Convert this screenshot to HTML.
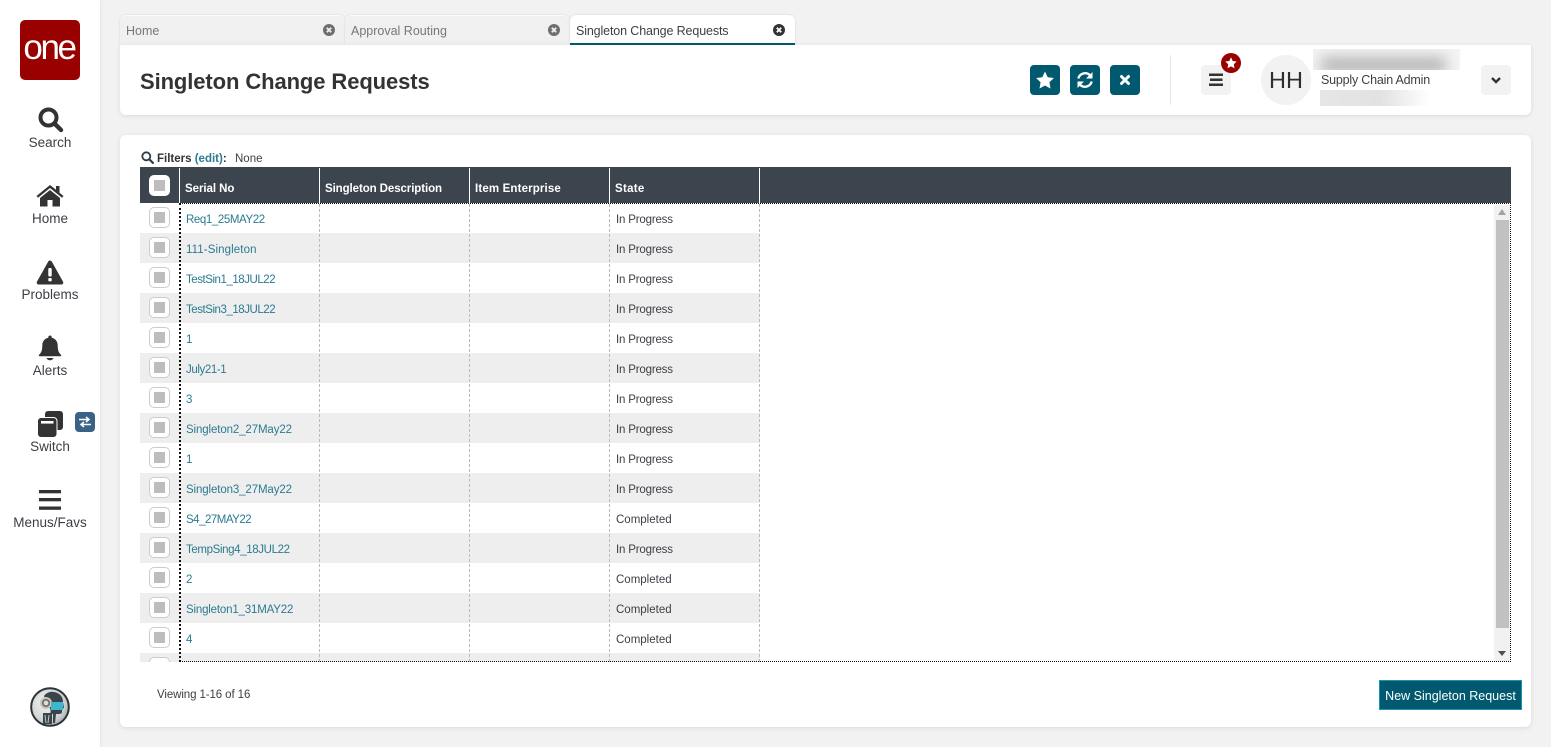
<!DOCTYPE html>
<html lang="en"><head><meta charset="utf-8"><title>Singleton Change Requests</title>
<style>
*{box-sizing:border-box}
html,body{margin:0;padding:0;width:1551px;height:747px;overflow:hidden;background:#f2f2f2;font-family:"Liberation Sans",sans-serif;color:#333}
.a,.t{position:absolute}
.t{white-space:nowrap}
#side{position:absolute;left:0;top:0;width:100px;height:747px;background:#fff;box-shadow:1px 0 3px rgba(0,0,0,.06)}
.nl{position:absolute;left:0;width:100px;text-align:center;font-size:13.5px;line-height:16px;color:#3b3f45}
.panel{position:absolute;background:#fff;border-radius:6px;box-shadow:0 1px 5px rgba(0,0,0,.1)}
.tab{position:absolute;top:15px;height:30px;width:225px;background:#f0f0f0;border-top:1px solid #fafafa;border-radius:6px 6px 0 0;box-shadow:0 0 2px rgba(0,0,0,.12);font-size:12.5px;line-height:30px;padding-left:6px;color:#777}
.tab.on{background:#fff;color:#3b3f45;border-bottom:2px solid #005a6e;border-top:0;line-height:33px;letter-spacing:-.13px}
.tab svg{position:absolute;left:202px;top:7px}
.tab.on svg{top:8px}
.btn{position:absolute;top:65px;width:30px;height:30px;border-radius:4px;background:#00596e}
.gbtn{position:absolute;top:65px;width:30px;height:30px;border-radius:4px;background:#f2f2f2}
.hc{position:absolute;top:182px;font-size:11.5px;line-height:14px;font-weight:bold;color:#fff;white-space:nowrap}
.vd{position:absolute;top:168px;width:1px;height:35px;background:#fff}
.row{position:absolute;left:0;width:620px;height:30px}
.row.g{background:#eee}
.cb{position:absolute;left:9px;top:4px;width:21px;height:21px;border:1px solid #ccc;border-radius:5px;background:#fff}
.cb i{position:absolute;left:4px;top:4px;width:11px;height:11px;background:#bdbdbd}
.s,.l{position:absolute;top:10px;font-size:11.5px;line-height:15px;white-space:nowrap}
.l{left:46px;color:#2a7b90}
.s{left:476px;color:#3b3f45;letter-spacing:-.18px}
.s.c{letter-spacing:0}
.dash{position:absolute;top:204px;height:458px;width:0;border-left:1px dashed #bbb}
</style></head><body>

<div id="side">
  <div class="a" style="left:20px;top:20px;width:60px;height:60px;background:#990000;border-radius:5px"></div>
  <div class="t" style="left:19px;top:26px;width:60px;text-align:center;color:#fff;font-size:35px;line-height:44px;letter-spacing:-2.4px">one</div>

  <svg class="a" style="left:38px;top:107px" width="26" height="26" viewBox="0 0 26 26"><circle cx="10.500" cy="10.500" r="8" fill="none" stroke="#333" stroke-width="4"/><path d="M16.500 16.500l6.500 6.500" stroke="#333" stroke-width="4.400" stroke-linecap="round"/></svg>
  <div class="nl" style="top:135px">Search</div>

  <svg class="a" style="left:36px;top:184px" width="28" height="23" viewBox="0 0 28 23"><path d="M14 1L.5 12l1.500 1.800L14 4l12 9.800 1.500-1.800L23.500 8.700V2h-3.500v3.800z" fill="#333"/><path d="M14 6L4 14v8.500h7.500V16h5v6.500H24V14z" fill="#333"/></svg>
  <div class="nl" style="top:211px">Home</div>

  <svg class="a" style="left:36px;top:259px" width="28" height="26" viewBox="0 0 28 26"><path d="M14 1.500c-.8 0-1.400.4-1.800 1.100L1 22.600c-.8 1.500.2 2.900 1.800 2.900h22.400c1.600 0 2.600-1.400 1.800-2.900L15.800 2.600c-.4-.7-1-1.100-1.800-1.100z" fill="#333"/><rect x="12.300" y="9" width="3.400" height="8.500" rx="1" fill="#fff"/><rect x="12.300" y="19" width="3.400" height="3.400" rx="1" fill="#fff"/></svg>
  <div class="nl" style="top:287px">Problems</div>

  <svg class="a" style="left:38px;top:335px" width="24" height="26" viewBox="0 0 24 26"><path d="M12 0.500c-1 0-1.700.7-1.700 1.700v.6C6.500 3.600 4.300 6.600 4.300 10.500c0 5.500-1.300 7.400-3.300 9.300-.5.500-.2 1.400.6 1.400h20.800c.8 0 1.100-.9.6-1.400-2-1.900-3.300-3.800-3.300-9.300 0-3.900-2.200-6.900-6-7.700v-.6c0-1-.7-1.700-1.700-1.700z" fill="#333"/><path d="M8.500 23h7c-.4 1.300-1.900 2.300-3.500 2.300S8.900 24.300 8.500 23z" fill="#333"/></svg>
  <div class="nl" style="top:363px">Alerts</div>

  <svg class="a" style="left:37px;top:410px" width="27" height="28" viewBox="0 0 27 28"><rect x="8" y="1" width="18" height="19" rx="3" fill="#333"/><rect x=".5" y="7.500" width="19.500" height="20" rx="3.500" fill="#333" stroke="#fff" stroke-width="1"/><rect x="4" y="11" width="12.500" height="2.600" fill="#fff"/></svg>
  <div class="a" style="left:75px;top:412px;width:20px;height:20px;border-radius:4px;background:#3a6186"></div>
  <svg class="a" style="left:78px;top:416px" width="14" height="12" viewBox="0 0 14 12"><path d="M1 3.500h9M8 1l3 2.500-3 2.500M13 8.500H4M6 6L3 8.500 6 11" fill="none" stroke="#fff" stroke-width="1.500"/></svg>
  <div class="nl" style="top:439px">Switch</div>

  <svg class="a" style="left:38px;top:489px" width="24" height="22" viewBox="0 0 24 22"><rect x="1" y="1" width="22" height="3.300" fill="#333"/><rect x="1" y="9" width="22" height="3.300" fill="#333"/><rect x="1" y="17.500" width="22" height="3.300" fill="#333"/></svg>
  <div class="nl" style="top:515px">Menus/Favs</div>

  <svg class="a" style="left:30px;top:687px" width="40" height="40" viewBox="0 0 40 40">
    <defs><radialGradient id="g" cx=".4" cy=".4" r=".7"><stop offset="0" stop-color="#f4f4f4"/><stop offset=".7" stop-color="#cfd0d1"/><stop offset="1" stop-color="#9a9c9e"/></radialGradient></defs>
    <circle cx="20" cy="20" r="18.800" fill="url(#g)" stroke="#2c3336" stroke-width="2"/>
    <path d="M14 9c2-3 6-5 10-4 6 1 9 5 9 10l1 6-2 1v3c0 2-2 2-6 2l-1 9H23v-9h-3c2-4-1-7-2-9z" fill="#3a454b"/>
    <path d="M13 26h9v11h-9z" fill="#3a454b"/><path d="M15 28l1 8M19 28l-1 8" stroke="#c5c9ca" stroke-width="1"/>
    <circle cx="16" cy="16" r="6" fill="#c9c5b5"/><circle cx="16" cy="16" r="4" fill="#6a6a62"/><circle cx="16" cy="16" r="2.400" fill="#ddd"/>
    <rect x="21" y="15" width="12" height="8" fill="#3fb6cf"/>
  </svg>
</div>

<div class="tab" style="left:120px">Home<svg width="14" height="14" viewBox="0 0 14 14"><circle cx="7" cy="7" r="6" fill="#6e6e6e"/><path d="M4.800 4.800l4.400 4.400M9.200 4.800L4.800 9.200" stroke="#f0f0f0" stroke-width="1.800"/></svg></div>
<div class="tab" style="left:345px">Approval Routing<svg width="14" height="14" viewBox="0 0 14 14"><circle cx="7" cy="7" r="6" fill="#6e6e6e"/><path d="M4.800 4.800l4.400 4.400M9.200 4.800L4.800 9.200" stroke="#f0f0f0" stroke-width="1.800"/></svg></div>
<div class="tab on" style="left:570px">Singleton Change Requests<svg width="14" height="14" viewBox="0 0 14 14"><circle cx="7" cy="7" r="6" fill="#333"/><path d="M4.800 4.800l4.400 4.400M9.200 4.800L4.800 9.200" stroke="#fff" stroke-width="1.800"/></svg></div>

<div class="panel" style="left:120px;top:45px;width:1411px;height:70px;border-radius:0 0 6px 6px"></div>
<div class="t" style="left:140px;top:68px;font-size:22px;line-height:28px;font-weight:bold;color:#333;letter-spacing:-.1px">Singleton Change Requests</div>

<div class="btn" style="left:1030px"><svg width="30" height="30" viewBox="0 0 30 30"><path d="M15 6.500l2.700 5.700 6.200.8-4.500 4.300 1.100 6.200L15 20.500l-5.500 3 1.100-6.200L6.100 13l6.200-.8z" fill="#fff"/></svg></div>
<div class="btn" style="left:1070px"><svg width="30" height="30" viewBox="0 0 30 30"><path d="M8.300 13.500A7 7 0 0 1 20 10.300M21.700 16.500A7 7 0 0 1 10 19.700" fill="none" stroke="#fff" stroke-width="2.400"/><path d="M22.500 7v6.500H16zM7.500 23v-6.500H14z" fill="#fff"/></svg></div>
<div class="btn" style="left:1110px"><svg width="30" height="30" viewBox="0 0 30 30"><path d="M11.500 11.500l7 7M18.500 11.500l-7 7" stroke="#fff" stroke-width="3" stroke-linecap="round"/></svg></div>
<div class="a" style="left:1170px;top:55px;width:1px;height:50px;background:#e8e8e8"></div>
<div class="gbtn" style="left:1201px"><svg width="30" height="30" viewBox="0 0 30 30"><path d="M8 8.500h14v2.500H8zM9 13.500h12.500V16H9zM8 18.500h14V21H8z" fill="#333"/></svg></div>
<svg class="a" style="left:1221px;top:53px" width="20" height="20" viewBox="0 0 20 20"><circle cx="10" cy="10" r="10" fill="#990000"/><path d="M10 4.300l1.700 3.700 4 .5-2.900 2.800.7 4L10 13.400l-3.500 1.900.7-4-2.900-2.800 4-.5z" fill="#fff"/></svg>
<div class="a" style="left:1261px;top:55px;width:50px;height:50px;border-radius:50%;background:#f2f2f2"></div>
<div class="t" style="left:1261px;top:67px;width:50px;text-align:center;font-size:23.500px;line-height:27px;color:#2b2f34">HH</div>

<div class="a" style="left:1313px;top:49px;width:147px;height:21px;overflow:hidden;background:#f4f4f4"><div class="a" style="left:8px;top:8px;width:125px;height:16px;background:#b5b5b5;filter:blur(7px)"></div></div>
<div class="t" style="left:1321px;top:72px;font-size:12.500px;line-height:16px;color:#3b3f45;letter-spacing:-.2px">Supply Chain Admin</div>
<div class="a" style="left:1320px;top:90px;width:110px;height:16px;background:linear-gradient(90deg,#e6e6e6,#e2e2e2 55%,#fff)"></div>
<div class="gbtn" style="left:1481px"><svg width="30" height="30" viewBox="0 0 30 30"><path d="M11 13l4 4 4-4" fill="none" stroke="#333" stroke-width="2.400"/></svg></div>

<div class="panel" style="left:120px;top:135px;width:1411px;height:592px"></div>

<svg class="a" style="left:141px;top:151px" width="13" height="13" viewBox="0 0 13 13"><circle cx="5.300" cy="5.300" r="4" fill="none" stroke="#2f3b45" stroke-width="1.800"/><path d="M8.300 8.300l3.600 3.600" stroke="#2f3b45" stroke-width="2.200" stroke-linecap="round"/></svg>
<div class="t" style="left:157px;top:152px;font-size:11.500px;line-height:14px;font-weight:bold;color:#333">Filters <span style="color:#2a7b90">(edit)</span>:</div>
<div class="t" style="left:235px;top:152px;font-size:11.500px;line-height:14px;color:#3b3f45">None</div>

<div class="a" style="left:140px;top:167px;width:1371px;height:36px;background:#3c444e"></div>
<div class="a" style="left:149px;top:175px;width:21px;height:21px;border-radius:5px;background:#fff"><i class="a" style="left:5px;top:5px;width:11px;height:11px;background:#bdbdbd"></i></div>
<div class="vd" style="left:179px"></div><div class="vd" style="left:319px"></div><div class="vd" style="left:469px"></div><div class="vd" style="left:609px"></div><div class="vd" style="left:759px"></div>
<div class="hc" style="left:185px;letter-spacing:-.05px">Serial No</div>
<div class="hc" style="left:325px;letter-spacing:-.09px">Singleton Description</div>
<div class="hc" style="left:475px;letter-spacing:.15px">Item Enterprise</div>
<div class="hc" style="left:615px;letter-spacing:.3px">State</div>

<div class="a" style="left:140px;top:203px;width:1354px;height:459px;overflow:hidden">
<div class="row" style="top:0"><div class="cb"><i></i></div><div class="l" style="letter-spacing:-.4px">Req1_25MAY22</div><div class="s">In Progress</div></div>
<div class="row g" style="top:30px"><div class="cb"><i></i></div><div class="l" style="letter-spacing:.1px">111-Singleton</div><div class="s">In Progress</div></div>
<div class="row" style="top:60px"><div class="cb"><i></i></div><div class="l" style="letter-spacing:-.46px">TestSin1_18JUL22</div><div class="s">In Progress</div></div>
<div class="row g" style="top:90px"><div class="cb"><i></i></div><div class="l" style="letter-spacing:-.46px">TestSin3_18JUL22</div><div class="s">In Progress</div></div>
<div class="row" style="top:120px"><div class="cb"><i></i></div><div class="l">1</div><div class="s">In Progress</div></div>
<div class="row g" style="top:150px"><div class="cb"><i></i></div><div class="l" style="letter-spacing:-.4px">July21-1</div><div class="s">In Progress</div></div>
<div class="row" style="top:180px"><div class="cb"><i></i></div><div class="l">3</div><div class="s">In Progress</div></div>
<div class="row g" style="top:210px"><div class="cb"><i></i></div><div class="l" style="letter-spacing:-.12px">Singleton2_27May22</div><div class="s">In Progress</div></div>
<div class="row" style="top:240px"><div class="cb"><i></i></div><div class="l">1</div><div class="s">In Progress</div></div>
<div class="row g" style="top:270px"><div class="cb"><i></i></div><div class="l" style="letter-spacing:-.12px">Singleton3_27May22</div><div class="s">In Progress</div></div>
<div class="row" style="top:300px"><div class="cb"><i></i></div><div class="l" style="letter-spacing:-.5px">S4_27MAY22</div><div class="s c">Completed</div></div>
<div class="row g" style="top:330px"><div class="cb"><i></i></div><div class="l" style="letter-spacing:-.37px">TempSing4_18JUL22</div><div class="s">In Progress</div></div>
<div class="row" style="top:360px"><div class="cb"><i></i></div><div class="l">2</div><div class="s c">Completed</div></div>
<div class="row g" style="top:390px"><div class="cb"><i></i></div><div class="l" style="letter-spacing:-.18px">Singleton1_31MAY22</div><div class="s c">Completed</div></div>
<div class="row" style="top:420px"><div class="cb"><i></i></div><div class="l">4</div><div class="s c">Completed</div></div>
<div class="row g" style="top:450px"><div class="cb"><i></i></div></div>
</div>

<div class="dash" style="left:319px"></div><div class="dash" style="left:469px"></div><div class="dash" style="left:609px"></div><div class="dash" style="left:759px"></div>

<div class="a" style="left:1494px;top:205px;width:16px;height:456px;background:#f1f1f1"></div>
<div class="a" style="left:1496px;top:220px;width:13px;height:408px;background:#c1c1c1"></div>
<svg class="a" style="left:1498px;top:209px" width="8" height="6" viewBox="0 0 8 6"><path d="M4 0l4 6H0z" fill="#a3a3a3"/></svg>
<svg class="a" style="left:1498px;top:651px" width="8" height="5" viewBox="0 0 8 5"><path d="M0 0h8L4 5z" fill="#505050"/></svg>

<div class="a" style="left:179px;top:203px;width:1332px;height:459px;border:1px dotted #111;border-left:2px dotted #111"></div>

<div class="t" style="left:157px;top:688px;font-size:11.500px;line-height:14px;color:#3b3f45;letter-spacing:-.1px">Viewing 1-16 of 16</div>
<div class="a" style="left:1379px;top:680px;width:143px;height:30px;background:#00596e;border:1px solid #1a93b0;color:#fff;font-size:12.500px;line-height:31px;text-align:center;white-space:nowrap">New Singleton Request</div>

</body></html>
